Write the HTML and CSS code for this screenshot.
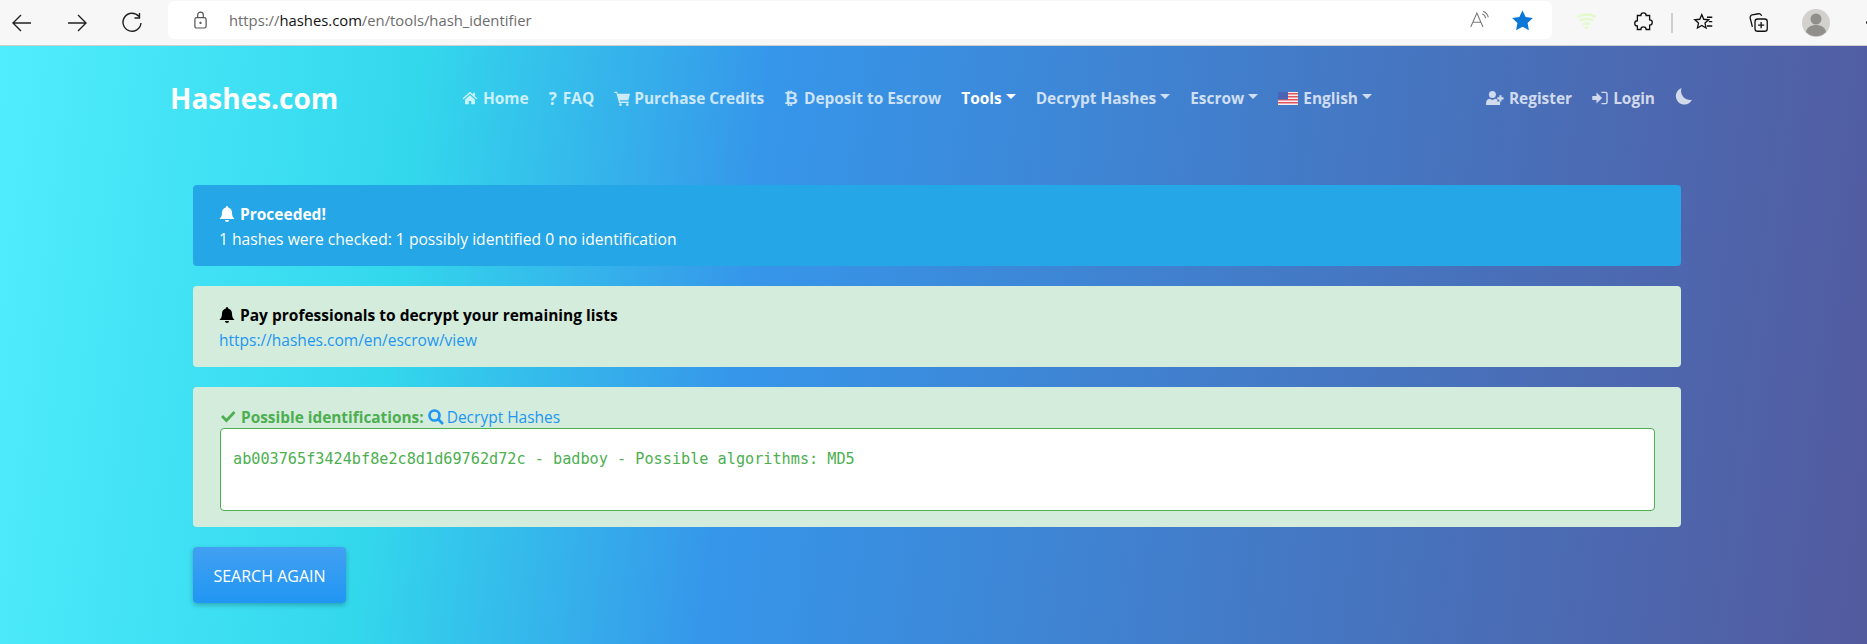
FILE: index.html
```html
<!DOCTYPE html>
<html lang="en">
<head>
<meta charset="UTF-8">
<meta name="viewport" content="width=device-width, initial-scale=1.0">
<title>Hash Identifier</title>
<link rel="stylesheet" href="styles.css">
</head>
<body>

<div class="browser-bar">
    <div class="bar-buttons">
        <svg class="bar-icon" viewBox="0 0 24 24"><path d="M21 12H3M11 4l-8 8 8 8"/></svg>
        <svg class="bar-icon" viewBox="0 0 24 24"><path d="M3 12h18M13 4l8 8-8 8"/></svg>
        <svg class="bar-icon" viewBox="0 0 24 24"><path d="M19 5.500A9 9 0 1 0 21 12M19.500 2v5h-5"/></svg>
    </div>
    <div class="address">
        <svg class="lock" viewBox="0 0 16 20"><rect x="2" y="7" width="12" height="11" rx="2"/><path d="M5 7V4a3 3 0 0 1 6 0v3"/><circle cx="8" cy="12.500" r=".6"/></svg>
        <span class="url">https://<b>hashes.com</b>/en/tools/hash_identifier</span>
        <svg class="read-icon" viewBox="0 0 24 20"><path d="M2 18L9 2l7 16M4.500 12.500h9M15 3a6 6 0 0 1 4 5M16 0a9 9 0 0 1 6 7"/></svg>
        <svg class="star" viewBox="0 0 24 24"><path d="M12 1.500l3.300 6.900 7.500 1-5.500 5.200 1.400 7.500-6.700-3.700-6.700 3.700 1.400-7.500L1.200 9.400l7.500-1z"/></svg>
    </div>
    <div class="bar-tools">
        <svg class="wifi" viewBox="0 0 22 20"><path d="M1 4q10-5 20 0M4 8q7-4 14 0M7 12q4-2 8 0M9 16q2-1 4 0"/></svg>
        <svg class="tool-icon puzzle" viewBox="0 0 24 24"><path d="M9 4a3 3 0 0 1 6 0h4v5a3 3 0 0 1 0 6v5h-4a3 3 0 0 0-6 0H5v-4a3 3 0 0 1 0-6V4z"/></svg>
        <span class="bar-sep"></span>
        <svg class="tool-icon favs" viewBox="0 0 24 24"><path d="M10 3l2.300 5.300 5.700.6-4.300 3.800 1.200 5.600-4.900-2.900-4.900 2.900 1.200-5.600L2 8.900l5.700-.6zM16 6h6M18 11h4M16 16h6"/></svg>
        <svg class="tool-icon collect" viewBox="0 0 24 24"><rect x="8" y="8" width="14" height="14" rx="3"/><path d="M15 11.500v7M11.500 15h7M5 17L2.500 7a3 3 0 0 1 2.300-3.600L12 2a3 3 0 0 1 3.500 2.500"/></svg>
        <svg class="avatar" viewBox="0 0 28 28"><circle cx="14" cy="14" r="14" fill="#d2d1cd"/><circle cx="14" cy="10" r="5.500" fill="#918f8b"/><path d="M4 23c1-5 5-7 10-7s9 2 10 7a14 14 0 0 1-20 0z" fill="#918f8b"/></svg>
        <span class="more-dot"></span>
    </div>
</div>

<div class="page">
    <nav class="navbar">
        <a class="brand" href="#">Hashes.com</a>
        <ul class="nav-main">
            <li><svg class="ico" viewBox="0 0 26 22"><path d="M13 1L1 11.500l1.500 1.500L13 4l10.500 9 1.500-1.500-4-3.500V2.500h-3v3zM5 13.500V21h6v-5h4v5h6v-7.500L13 6.500z"/></svg>Home</li>
            <li><span class="glyph">?</span>FAQ</li>
            <li><svg class="ico cart" viewBox="0 0 24 22"><path d="M0 1h4l1 3h18l-2.500 9.500H8l.5 2H21v2H7L3 3H0z"/><circle cx="9" cy="20" r="2"/><circle cx="19" cy="20" r="2"/></svg>Purchase Credits</li>
            <li><span class="glyph btc">₿</span>Deposit to Escrow</li>
            <li class="active">Tools<span class="caret"></span></li>
            <li>Decrypt Hashes<span class="caret"></span></li>
            <li>Escrow<span class="caret"></span></li>
            <li>
                <svg class="flag" viewBox="0 0 20 13"><rect width="20" height="13" fill="#f4eeee"/><path d="M0 1h20v1.500H0zM0 4h20v1.500H0zM0 7h20v1.500H0zM0 10h20v1.500H0z" fill="#e2545c"/><rect width="10" height="7.500" fill="#4a64b8"/></svg>English<span class="caret"></span>
            </li>
        </ul>
        <ul class="nav-user">
            <li><svg class="ico wide" viewBox="0 0 26 20"><circle cx="10" cy="5" r="5"/><path d="M1 20v-3c0-4 3-6 5-6l4 2 4-2c1 0 2 .5 3 1v3h4v5z"/><path d="M20 6h3v3h3v3h-3v3h-3v-3h-3V9h3z"/></svg>Register</li>
            <li><svg class="ico" viewBox="0 0 22 20"><path d="M0 7h6V2l8 8-8 8v-5H0zM13 1h6a3 3 0 0 1 3 3v12a3 3 0 0 1-3 3h-6v-2h6a1 1 0 0 0 1-1V4a1 1 0 0 0-1-1h-6z"/></svg>Login</li>
            <li><svg class="moon" viewBox="0 0 18 18"><path d="M7 0a9 9 0 1 0 11 12.500A9.500 9.500 0 0 1 7 0z"/></svg></li>
        </ul>
    </nav>

    <main class="content">
        <div class="alert alert-info">
            <div class="alert-title"><svg class="bell" viewBox="0 0 16 17"><path d="M8 0a1.300 1.300 0 0 0-1.200 1.400C4.500 2 3 4 3 6.500 3 10 2 11.500 .5 13h15C14 11.500 13 10 13 6.500c0-2.500-1.500-4.500-3.800-5.100A1.300 1.300 0 0 0 8 0zM6 14a2 2 0 0 0 4 0z"/></svg>Proceeded!</div>
            <div>1 hashes were checked: 1 possibly identified 0 no identification</div>
        </div>
        <div class="alert alert-green">
            <div class="alert-title dark"><svg class="bell" viewBox="0 0 16 17"><path d="M8 0a1.300 1.300 0 0 0-1.200 1.400C4.500 2 3 4 3 6.500 3 10 2 11.500 .5 13h15C14 11.500 13 10 13 6.500c0-2.500-1.500-4.500-3.800-5.100A1.300 1.300 0 0 0 8 0zM6 14a2 2 0 0 0 4 0z"/></svg>Pay professionals to decrypt your remaining lists</div>
            <a class="link" href="#">https://hashes.com/en/escrow/view</a>
        </div>
        <div class="alert alert-green result-box">
            <div class="result-head">
                <svg class="check" viewBox="0 0 16 13"><path d="M1 7l2-2 3.500 3.500L13.500 1 15.500 3 6.500 12.500z"/></svg><b>Possible identifications:</b>
                <a class="link" href="#"><svg class="search" viewBox="0 0 16 16"><circle cx="6.500" cy="6.500" r="5"/><path d="M10 10l5 5"/></svg>Decrypt Hashes</a>
            </div>
            <div class="result-area">ab003765f3424bf8e2c8d1d69762d72c - badboy - Possible algorithms: MD5</div>
        </div>
        <button class="btn-search">SEARCH AGAIN</button>
    </main>
</div>

</body>
</html>
```

FILE: styles.css
```css
* {
    box-sizing: border-box;
}

html, body {
    height: 100%;
}

body {
    margin: 0;
    font-family: "Open Sans", "Noto Sans", Arial, sans-serif;
    font-size: 15.650px;
    overflow: hidden;
    display: flex;
    flex-direction: column;
}

/* browser chrome */
.browser-bar {
    height: 46px;
    flex: none;
    display: flex;
    align-items: center;
    background-color: #f7f7f7;
    border-bottom: 1px solid #cfcfcf;
}

.bar-buttons {
    width: 168px;
    flex: none;
    display: flex;
    gap: 31px;
    padding-left: 10px;
}

.bar-icon {
    width: 24px;
    height: 24px;
    fill: none;
    stroke: #222;
    stroke-width: 1.4;
}

.address {
    width: 1384px;
    flex: none;
    height: 38px;
    margin-bottom: 5px;
    display: flex;
    align-items: center;
    background-color: #fff;
    border-radius: 6px;
    padding-left: 25px;
}

.lock {
    width: 15px;
    height: 19px;
    fill: none;
    stroke: #555;
    stroke-width: 1.3;
}

.url {
    margin-left: 21px;
    font-size: 14.800px;
    color: #6d6d6d;
    white-space: nowrap;
}

.url b {
    font-weight: 400;
    color: #111;
}

.read-icon {
    width: 21px;
    height: 18px;
    margin-left: auto;
    fill: none;
    stroke: #777;
    stroke-width: 1.2;
}

.star {
    width: 23px;
    height: 23px;
    margin: 0 18px 0 21px;
    fill: #0a78d6;
}

.bar-tools {
    display: flex;
    align-items: center;
    padding-left: 24px;
}

.wifi {
    width: 21px;
    height: 19px;
    fill: none;
    stroke: #e4f9cc;
    stroke-width: 2.600;
}

.tool-icon {
    width: 21px;
    height: 21px;
    fill: none;
    stroke: #111;
    stroke-width: 1.500;
}

.puzzle {
    margin-left: 36px;
}

.bar-sep {
    width: 2px;
    height: 20px;
    margin: 0 20px 0 17px;
    background-color: #cfcfcf;
}

.collect {
    margin-left: 34px;
}

.avatar {
    width: 28px;
    height: 28px;
    margin-left: 33px;
}

.more-dot {
    width: 3px;
    height: 3px;
    margin-left: 36px;
    border-radius: 50%;
    background-color: #111;
}

/* page */
.page {
    flex: 1;
    background: linear-gradient(97deg, #50edfd 0%, #33d7ec 22%, #3696ea 40%, #535a9e 100%);
}

.navbar {
    display: flex;
    align-items: center;
    height: 104px;
    padding: 0 175px 0 170px;
    color: rgba(255, 255, 255, 0.75);
    font-weight: 700;
    font-size: 15.450px;
}

.navbar ul {
    display: flex;
    align-items: center;
    margin: 0;
    padding: 0;
    list-style: none;
}

.navbar li {
    display: flex;
    align-items: center;
    white-space: nowrap;
}

.brand {
    width: 292px;
    flex: none;
    font-size: 28px;
    font-weight: 700;
    color: #fff;
    text-decoration: none;
}

.nav-main {
    gap: 20px;
}

.navbar .nav-user {
    gap: 20px;
    margin-left: auto;
}

.navbar .active {
    color: #fff;
}

.ico {
    width: 16px;
    height: 14px;
    margin-right: 5px;
    fill: currentColor;
}

.ico.wide {
    width: 19px;
}

.ico.cart {
    width: 17px;
    height: 15px;
    margin-right: 3px;
}

.glyph {
    margin-right: 6px;
    font-size: 17px;
    line-height: 1;
}

.btc {
    font-family: "DejaVu Sans", sans-serif;
}

.caret {
    width: 0;
    height: 0;
    margin-left: 4px;
    margin-bottom: 4px;
    border-top: 5px solid currentColor;
    border-left: 5px solid transparent;
    border-right: 5px solid transparent;
}

.flag {
    width: 20px;
    height: 13px;
    margin-right: 5px;
}

.moon {
    width: 17px;
    height: 17px;
    margin-bottom: 4px;
    fill: currentColor;
}

.content {
    padding: 35px 186px 0 193px;
    display: flex;
    flex-direction: column;
    gap: 20px;
    align-items: flex-start;
}

.alert {
    width: 100%;
    padding: 17px 26px 0;
    height: 81px;
    border-radius: 4px;
    line-height: 25px;
}

.alert-info {
    background-color: #25a6e6;
    color: #fff;
}

.alert-green {
    background-color: #d4ecdc;
}

.alert-title {
    display: flex;
    align-items: center;
    font-weight: 700;
    font-size: 15.500px;
}

.alert-title.dark {
    color: #000;
}

.bell {
    width: 16px;
    height: 17px;
    margin-right: 5px;
    fill: currentColor;
}

.link {
    color: #2196f3;
    font-size: 15.500px;
    text-decoration: none;
}

.result-box {
    height: 140px;
    padding: 19px 26px 0 27px;
}

.result-head {
    height: 22px;
    color: #4caf50;
    font-size: 15.400px;
    line-height: 23px;
}

.check {
    width: 16px;
    height: 13px;
    margin-right: 5px;
    fill: currentColor;
}

.search {
    width: 16px;
    height: 16px;
    margin: 0 3px 0 0;
    vertical-align: -2px;
    fill: none;
    stroke: currentColor;
    stroke-width: 2.700;
}

.result-area {
    height: 83px;
    padding: 20px 12px;
    background-color: #fff;
    border: 1px solid #4caf50;
    border-radius: 4px;
    color: #4caf50;
    font-family: "DejaVu Sans Mono", monospace;
    font-size: 15.200px;
    line-height: 20px;
}

.btn-search {
    width: 153px;
    height: 56px;
    padding: 2px 0 0;
    border: none;
    border-radius: 4px;
    background: linear-gradient(#42a0f2, #2196f3);
    color: #fff;
    font-family: "Open Sans", sans-serif;
    font-size: 16px;
    box-shadow: 0 2px 5px rgba(0, 0, 0, 0.25);
    cursor: pointer;
}
```
